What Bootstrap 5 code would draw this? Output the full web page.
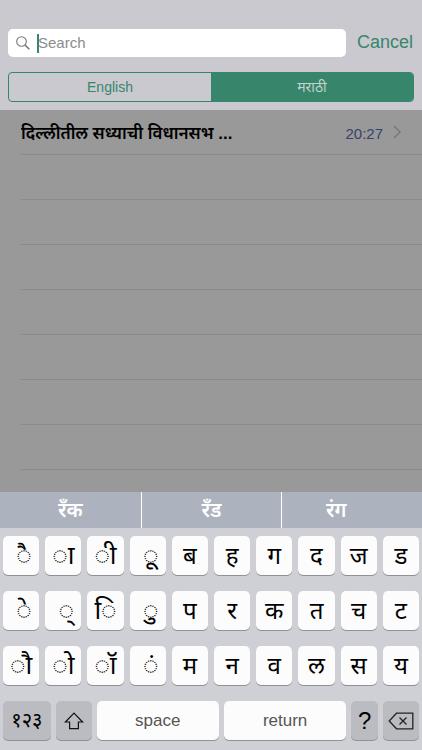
<!DOCTYPE html>
<html lang="mr">
<head>
<meta charset="utf-8">
<meta name="viewport" content="width=device-width, initial-scale=1">
<title>Search</title>
<link href="https://cdn.jsdelivr.net/npm/bootstrap@5.3.0/dist/css/bootstrap.min.css" rel="stylesheet">
<style>
body{font-family:"Liberation Sans","Noto Sans",sans-serif;background:#cacad0;color:#000;line-height:1.2}
.top-bar{padding:29px 8px 8px 8px;background:#cac9d0}
.search-box{height:28px;border-radius:5px;background:#fff}
.search-box input{font-size:15px;color:#222;caret-color:#37866b;outline:0;min-width:0;margin-left:-1px}
.search-box input::placeholder{color:#8b8b90;opacity:1}
.caret-bar{width:2px;height:19px;margin-left:7px;background:#37866b}
.cancel{font-size:18px;color:#37866b;line-height:24px;padding:0 1px 2px 11px}
.segments{margin-top:15px;height:30px;border:1px solid #37866b;border-radius:4px;overflow:hidden}
.segments button{flex:1 1 0;border:0;font-size:14px;background:transparent;color:#37866b;padding:0}
.segments button.chosen{background:#37866b;color:#c3d3d0}
.results{background:#999;overflow:hidden;flex:1 1 0;min-height:0}
.results li{height:45px;flex:none;margin-left:21px;border-bottom:1px solid #8b8b8d}
.results a{color:#000;height:44px;padding-right:19px}
.headline{font-size:17px;font-weight:600;line-height:40px;padding-top:4px}
.clock{font-size:15px;color:#37416b}
.hints{height:36px;background:#adb3be}
.hints button{width:33.333%;border:0;background:transparent;color:#fff;font-size:20px;font-weight:600;padding:0;line-height:36px}
.hints button+button{border-left:1px solid #fff}
.hints button:last-child{padding-right:32px}
.keyboard{background:#cfd0d5;padding:8px 3px 10px;gap:16px}
.keys{display:grid;grid-template-columns:repeat(10,minmax(0,1fr));gap:6px}
.keyboard button{height:39px;border:0;border-radius:5px;background:#fcfcfc;box-shadow:0 1px 0 #8f9196;color:#000;font-size:24px;line-height:39px;padding:0;min-width:0;white-space:nowrap}
.keyboard .keys .sign{font-size:26px}
.keyboard .keys .shifted{padding-left:6px}
.actions{display:grid;grid-template-columns:48fr 36fr 123fr 123fr 27fr 36fr;gap:5px}
.keyboard .gray{background:#bbbcc1}
.keyboard .word{font-size:17px;color:#555}
.keyboard .digits{font-size:20px}
</style>
<script src="https://cdn.jsdelivr.net/npm/bootstrap@5.3.0/dist/js/bootstrap.bundle.min.js"></script>
</head>
<body>
<div class="d-flex flex-column vh-100">
<header class="top-bar">
  <form class="d-flex align-items-center">
    <label class="search-box d-flex align-items-center flex-grow-1 ps-2" for="q">
      <svg width="14" height="14" viewBox="0 0 14 14" fill="none" stroke="#77777c" stroke-width="1.1" aria-hidden="true"><circle cx="5.5" cy="5.5" r="4.8"/><path d="M9 9l4.3 4.3" stroke-width="1.6"/></svg>
      <span class="caret-bar"></span>
      <input id="q" class="border-0 p-0 flex-grow-1 bg-transparent" type="text" placeholder="Search" aria-label="Search">
    </label>
    <button type="button" class="cancel border-0 bg-transparent">Cancel</button>
  </form>
  <div class="segments d-flex" role="group" aria-label="Language">
    <button type="button">English</button>
    <button type="button" class="chosen">मराठी</button>
  </div>
</header>
<ul class="results list-unstyled d-flex flex-column m-0">
  <li><a href="#" class="d-flex align-items-center text-decoration-none">
    <span class="headline flex-grow-1 text-truncate">दिल्लीतील सध्याची विधानसभ ...</span>
    <span class="clock pt-1">20:27</span>
    <svg class="ms-2" width="12" height="14" viewBox="0 0 12 14" fill="none" stroke="#77777a" stroke-width="1.4" aria-hidden="true"><path d="M3 1l6 6-6 6"/></svg>
  </a></li>
  <li></li><li></li><li></li><li></li><li></li><li></li><li></li>
</ul>
<div class="hints d-flex"><button type="button">रँक</button><button type="button">रँड</button><button type="button">रंग</button></div>
<div class="keyboard d-flex flex-column">
  <div class="keys">
    <button type="button" class="sign shifted">◌ै</button><button type="button" class="sign">◌ा</button><button type="button" class="sign">◌ी</button><button type="button" class="sign shifted">◌ू</button><button type="button">ब</button><button type="button">ह</button><button type="button">ग</button><button type="button">द</button><button type="button">ज</button><button type="button">ड</button>
  </div>
  <div class="keys">
    <button type="button" class="sign shifted">◌े</button><button type="button" class="sign shifted">◌्</button><button type="button" class="sign">◌ि</button><button type="button" class="sign shifted">◌ु</button><button type="button">प</button><button type="button">र</button><button type="button">क</button><button type="button">त</button><button type="button">च</button><button type="button">ट</button>
  </div>
  <div class="keys">
    <button type="button" class="sign">◌ौ</button><button type="button" class="sign">◌ो</button><button type="button" class="sign">◌ॉ</button><button type="button" class="sign shifted">◌ं</button><button type="button">म</button><button type="button">न</button><button type="button">व</button><button type="button">ल</button><button type="button">स</button><button type="button">य</button>
  </div>
  <div class="actions">
    <button type="button" class="gray digits">१२३</button>
    <button type="button" class="gray d-flex align-items-center justify-content-center" aria-label="Shift"><svg width="20" height="18" viewBox="0 0 20 18" fill="none" stroke="#111" stroke-width="1.2" aria-hidden="true"><path d="M10 1.2L18.6 10H14.4V16.6H5.6V10H1.4Z"/></svg></button>
    <button type="button" class="word">space</button>
    <button type="button" class="word">return</button>
    <button type="button" class="gray">?</button>
    <button type="button" class="gray d-flex align-items-center justify-content-center" aria-label="Delete"><svg width="26" height="18" viewBox="0 0 26 18" fill="none" stroke="#222" stroke-width="1.3" aria-hidden="true"><path d="M8.5 1.2H24.8V16.8H8.5L1.2 9ZM11.5 5.5l7 7M18.5 5.5l-7 7"/></svg></button>
  </div>
</div>
</div>
</body>
</html>
